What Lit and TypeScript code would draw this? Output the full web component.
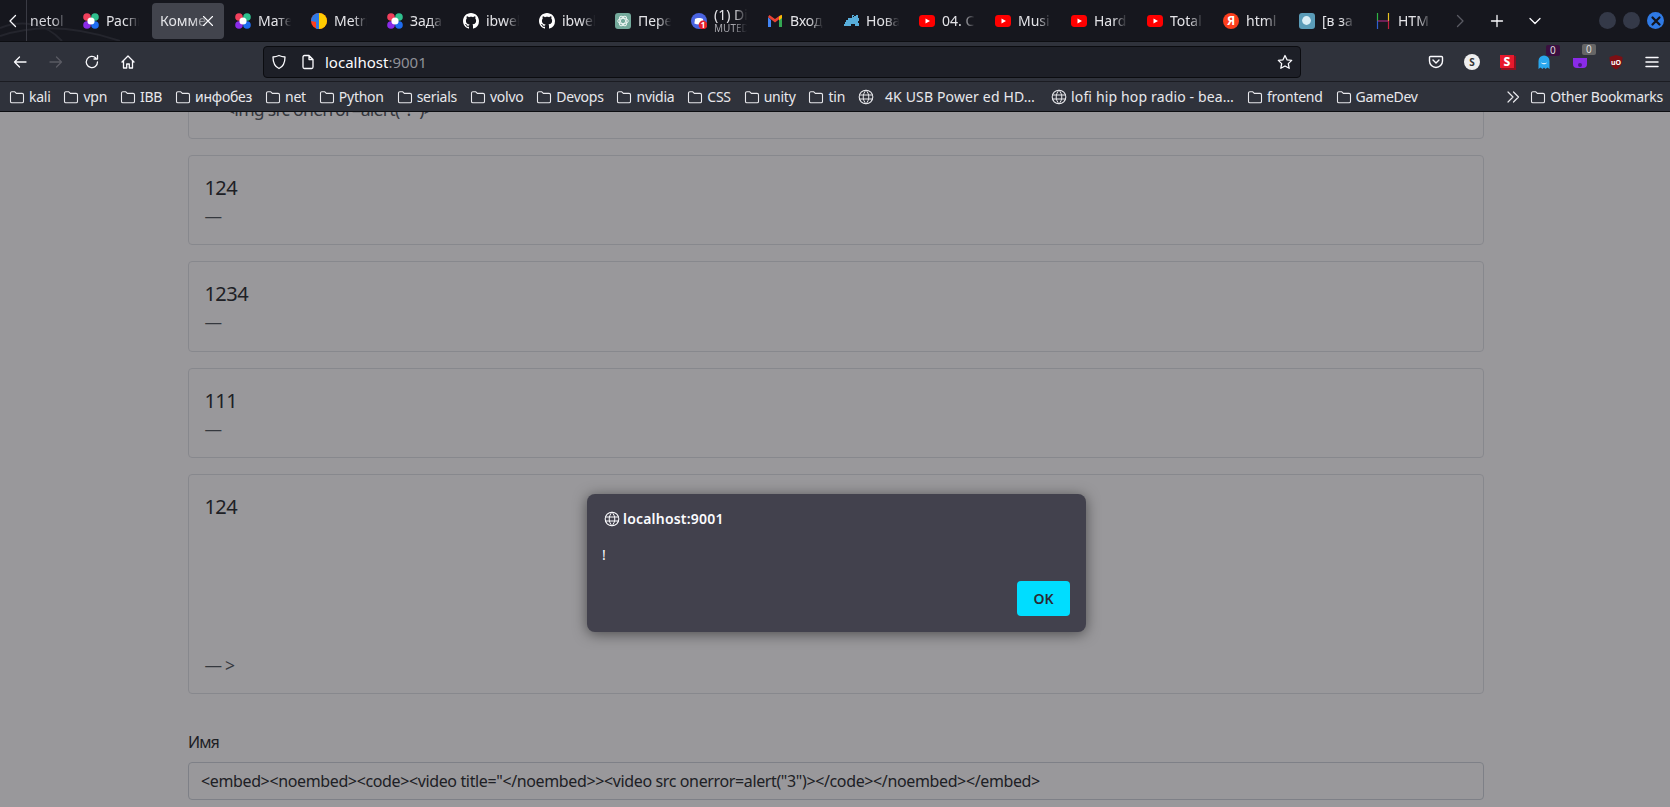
import { LitElement, html, css, svg } from "lit";
import { customElement } from "lit/decorators.js";

const ico = (body: unknown, size = 16, box = 16) =>
  html`<svg width=${size} height=${size} viewBox="0 0 ${box} ${box}" fill="none">${body}</svg>`;

const line = (d: string, w = 1.3) =>
  svg`<path d=${d} stroke="currentColor" stroke-width=${w} stroke-linecap="round" stroke-linejoin="round" fill="none"/>`;

const flower = ico(svg`
  <circle cx="4" cy="4" r="3.8" fill="#f0405c"/>
  <circle cx="12" cy="4" r="3.8" fill="#2fc08e"/>
  <circle cx="4" cy="12" r="3.8" fill="#8a2be8"/>
  <circle cx="12" cy="12" r="3.8" fill="#1e6cf0"/>
  <circle cx="8" cy="8" r="3.6" fill="#fff"/>`);
const metrika = ico(svg`
  <circle cx="8" cy="8" r="8" fill="#fc3f1d"/>
  <path d="M8 0a8 8 0 0 1 0 16z" fill="#ffcc00"/>
  <path d="M8 0a8 8 0 0 0-8 8l8 1.5z" fill="#2f7ae5"/>
  <path d="M5 9l3-1v8a8 8 0 0 1-3-.6z" fill="#2f7ae5"/>`);
const github = ico(svg`<path fill="#fff" d="M8 0C3.58 0 0 3.58 0 8c0 3.54 2.29 6.53 5.47 7.59.4.07.55-.17.55-.38 0-.19-.01-.82-.01-1.49-2.01.37-2.53-.49-2.69-.94-.09-.23-.48-.94-.82-1.13-.28-.15-.68-.52-.01-.53.63-.01 1.08.58 1.23.82.72 1.21 1.87.87 2.33.66.07-.52.28-.87.51-1.07-1.78-.2-3.64-.89-3.64-3.95 0-.87.31-1.59.82-2.15-.08-.2-.36-1.02.08-2.12 0 0 .67-.21 2.2.82.64-.18 1.32-.27 2-.27.68 0 1.36.09 2 .27 1.53-1.04 2.2-.82 2.2-.82.44 1.1.16 1.92.08 2.12.51.56.82 1.27.82 2.15 0 3.07-1.87 3.75-3.65 3.95.29.25.54.73.54 1.48 0 1.07-.01 1.93-.01 2.2 0 .21.15.46.55.38A8.013 8.013 0 0016 8c0-4.42-3.58-8-8-8z"/>`);
const gpt = ico(svg`
  <rect width="16" height="16" rx="3" fill="#74aa9c"/>
  <g stroke="#e8f2ef" stroke-width="1" fill="none">
    <ellipse cx="8" cy="8" rx="5.2" ry="2.6"/>
    <ellipse cx="8" cy="8" rx="5.2" ry="2.6" transform="rotate(60 8 8)"/>
    <ellipse cx="8" cy="8" rx="5.2" ry="2.6" transform="rotate(120 8 8)"/>
  </g>`);
const discord = ico(svg`
  <circle cx="8" cy="8" r="8" fill="#4a64e0"/>
  <path d="M4 6c2-1.4 6-1.4 8 0l.6 4.4c-2.6 1.4-6.6 1.4-9.2 0z" fill="#fff"/>
  <circle cx="12" cy="12" r="4.4" fill="#e5202a"/>
  <text x="12" y="15" font-size="8" font-weight="700" text-anchor="middle" fill="#fff" font-family="Noto Sans">1</text>`);
const gmail = ico(svg`
  <path d="M1 4v10h3V7z" fill="#4285f4"/>
  <path d="M12 7v7h3V4z" fill="#34a853"/>
  <path d="M1 4l7 5.5L15 4l-1.4-2L8 6 2.4 2z" fill="#ea4335"/>
  <path d="M12 3.4L15 1.8 15 5l-3 2.4z" fill="#fbbc04"/>`);
const frog = ico(svg`
  <path fill="#58aedb" d="M9 2h2v1h2V2h2v3h1v3h-1v2h1v3h-4v-2H8v2H1v-2h1V9h1V7h2V5h4z"/>
  <rect x="10" y="3" width="1" height="1" fill="#17181f"/>`);
const yt = ico(svg`
  <rect y="2" width="16" height="12" rx="3.4" fill="#f00"/>
  <path d="M6.5 5.5v5L11 8z" fill="#fff"/>`);
const yandex = ico(svg`
  <circle cx="8" cy="8" r="8" fill="#fc3f1d"/>
  <text x="8" y="12.4" font-size="12" font-weight="700" text-anchor="middle" fill="#fff" font-family="Noto Sans">Я</text>`);
const orb = ico(svg`
  <rect width="16" height="16" rx="3" fill="#5a9cb8"/>
  <circle cx="7.5" cy="7.5" r="4.4" fill="#d9eef6"/>`);
const htmlMark = ico(svg`
  <path d="M2.5 0v8" stroke="#2fb344" stroke-width="1.2"/>
  <path d="M13.5 0v8" stroke="#e8c220" stroke-width="1.2"/>
  <path d="M2.5 8h11" stroke="#c22a8c" stroke-width="1.2"/>
  <path d="M2.5 8v8" stroke="#2f5fd0" stroke-width="1.2"/>
  <path d="M13.5 8v8" stroke="#c02040" stroke-width="1.2"/>`);

const folder = ico(line("M1.5 4.2c0-.8.6-1.4 1.4-1.4h2.9l1.5 1.6h5.8c.8 0 1.4.6 1.4 1.4v6.6c0 .8-.6 1.3-1.4 1.3H2.9c-.8 0-1.4-.5-1.4-1.3z", 1.1));
const globe = (size = 16) =>
  ico(svg`${line("M8 1.2a6.8 6.8 0 1 0 0 13.6A6.8 6.8 0 0 0 8 1.2z", 1.1)}
    ${line("M1.4 6h13.2M1.4 10h13.2M8 1.2C4.2 5 4.2 11 8 14.8M8 1.2c3.8 3.8 3.8 9.8 0 13.6", 1)}`, size);

interface Tab { icon?: unknown; text: string; sub?: string; active?: boolean }

const TABS: Tab[] = [
  { icon: flower, text: "Распи" },
  { text: "Комме", active: true },
  { icon: flower, text: "Мате" },
  { icon: metrika, text: "Metri" },
  { icon: flower, text: "Зада" },
  { icon: github, text: "ibwel" },
  { icon: github, text: "ibwel" },
  { icon: gpt, text: "Пере" },
  { icon: discord, text: "(1) Di", sub: "MUTED" },
  { icon: gmail, text: "Вход" },
  { icon: frog, text: "Нова" },
  { icon: yt, text: "04. C" },
  { icon: yt, text: "Musi" },
  { icon: yt, text: "Hard" },
  { icon: yt, text: "Total" },
  { icon: yandex, text: "html" },
  { icon: orb, text: "[в за" },
  { icon: htmlMark, text: "HTM" },
];

const BOOKMARKS: { label: string; web?: boolean; cls?: string }[] = [
  { label: "kali" }, { label: "vpn" }, { label: "IBB" }, { label: "инфобез" },
  { label: "net" }, { label: "Python" }, { label: "serials" }, { label: "volvo" },
  { label: "Devops" }, { label: "nvidia" }, { label: "CSS" }, { label: "unity" }, { label: "tin" },
  { label: "4K USB Power ed HD…", web: true, cls: "web wide" },
  { label: "lofi hip hop radio - bea…", web: true, cls: "web" },
  { label: "frontend" }, { label: "GameDev" },
];

@customElement("app-root")
export class AppRoot extends LitElement {
  static styles = css`
    :host {
      display: block;
      height: 100vh;
      overflow: hidden;
      position: relative;
      background: #fff;
      font-family: "Noto Sans", sans-serif;
    }
    .chrome {
      color: #fbfbfe;
      position: relative;
      z-index: 2;
    }
    svg { display: block; flex: none; }

    .tabs {
      height: 41px;
      background: #16171e;
      display: flex;
      align-items: center;
      position: relative;
      font-size: 14px;
    }
    .wallpaper {
      position: absolute;
      left: 0;
      top: 0;
      pointer-events: none;
    }
    .scroll-left {
      width: 27px;
      height: 41px;
      flex: none;
      display: flex;
      align-items: center;
      justify-content: center;
      border-right: 1px solid #3a3b44;
      box-sizing: border-box;
      margin-right: 1px;
      position: relative;
    }
    .first {
      width: 46px;
      flex: none;
      color: #d5d5db;
      font-size: 14px;
      padding-left: 2px;
      box-sizing: border-box;
      overflow: hidden;
      white-space: nowrap;
      -webkit-mask-image: linear-gradient(90deg, #000 55%, transparent 85%);
    }
    .tab {
      width: 72px;
      height: 36px;
      margin: 0 2px;
      flex: none;
      box-sizing: border-box;
      padding: 0 7px;
      display: flex;
      align-items: center;
      gap: 7px;
      border-radius: 4px;
      overflow: hidden;
      position: relative;
    }
    .tab.active {
      background: #42444d;
      padding-left: 8px;
    }
    .tab-text {
      flex: 1;
      min-width: 0;
      overflow: hidden;
      white-space: nowrap;
      line-height: 16px;
      color: #e4e4e8;
      -webkit-mask-image: linear-gradient(90deg, #000 55%, transparent 95%);
    }
    .tab-sub {
      display: block;
      font-size: 10px;
      line-height: 11px;
      color: #a6a6ad;
    }
    .tab-close {
      position: absolute;
      right: 8px;
      top: 10px;
    }
    .tab-ctrl {
      flex: none;
      display: flex;
      align-items: center;
      justify-content: center;
      width: 38px;
    }
    .tab-ctrl.more { width: 36px; }
    .dim { color: #5a5b63; }
    .winbtns {
      margin-left: auto;
      margin-right: 6px;
      display: flex;
      gap: 7px;
    }
    .winbtn {
      width: 17px;
      height: 17px;
      border-radius: 50%;
      background: #343948;
      display: flex;
      align-items: center;
      justify-content: center;
    }
    .winbtn.close { background: #2f7ae5; color: #12141c; }

    .nav {
      height: 40px;
      background: #2f323b;
      border-top: 1px solid #0d0e12;
      box-sizing: border-box;
      display: flex;
      align-items: center;
      padding: 0 0 0 2px;
    }
    .nav-btn {
      width: 36px;
      height: 32px;
      flex: none;
      display: flex;
      align-items: center;
      justify-content: center;
      position: relative;
    }
    .url {
      width: 1038px;
      height: 32px;
      margin-left: 117px;
      margin-right: 117px;
      flex: none;
      box-sizing: border-box;
      background: #1d1f27;
      border: 1px solid #0b0c10;
      border-radius: 4px;
      display: flex;
      align-items: center;
      padding: 0 7px 0 7px;
      font-size: 15px;
      color: #fbfbfe;
    }
    .url svg.shield { margin-right: 13px; }
    .url svg.doc { margin-right: 9px; }
    .url .port { color: #8f9097; }
    .url .star { margin-left: auto; }
    .badge {
      position: absolute;
      top: -1px;
      left: 20px;
      font-size: 10px;
      line-height: 11px;
      padding: 0 4px;
      border-radius: 2px;
      color: #ddd;
      background: #3a0f3f;
    }
    .badge.grey { background: #666; top: -2px; }

    .bookmarks {
      height: 31px;
      background: #2f323b;
      border-top: 1px solid #1b1c22;
      box-sizing: border-box;
      display: flex;
      align-items: center;
      padding-left: 9px;
      font-size: 14px;
      color: #e8e8ec;
      white-space: nowrap;
      border-bottom: 1px solid #0d0e12;
      letter-spacing: -0.25px;
    }
    .bm {
      display: flex;
      align-items: center;
      gap: 4px;
      margin-right: 12.9px;
      flex: none;
    }
    .bm.web { letter-spacing: 0.15px; gap: 4px; }
    .bm.wide { gap: 11px; margin-right: 16px; }
    .bm-more { margin-left: auto; margin-right: 9px; }
    .bm.last { margin-right: 7px; }

    .viewport {
      height: calc(100vh - 112px);
      overflow: hidden;
    }
    .content {
      width: 1296px;
      margin: -63.6px auto 0 188px;
      color: #212529;
    }
    .card {
      border: 1px solid #dee2e6;
      border-radius: 4px;
      padding: 17px 16px 15px 15.4px;
      margin-bottom: 16px;
      height: 90.4px;
      box-sizing: border-box;
    }
    .card.tall { height: 219.6px; }
    .card.tall .desc { margin-top: 130px; }
    .title { font-size: 20px; line-height: 30px; letter-spacing: -0.5px; }
    .desc { font-size: 17.6px; line-height: 26.4px; color: #495057; letter-spacing: -0.75px; }
    .name-label {
      margin-top: 36px;
      margin-bottom: 8px;
      font-size: 16px;
      line-height: 24px;
      color: #212529;
      letter-spacing: -0.9px;
    }
    .field {
      height: 38px;
      box-sizing: border-box;
      border: 1px solid #ced4da;
      border-radius: 4px;
      padding: 0 12px;
      font-size: 16px;
      line-height: 36px;
      color: #212529;
      white-space: nowrap;
      letter-spacing: -0.37px;
    }

    .scrim {
      position: absolute;
      left: 0;
      right: 0;
      top: 112px;
      bottom: 0;
      background: rgba(28, 27, 34, 0.45);
      z-index: 1;
    }
    .dialog {
      position: absolute;
      left: 587px;
      top: 494px;
      width: 499px;
      height: 138px;
      box-sizing: border-box;
      padding: 16px 16px 16px 17px;
      background: #42414d;
      border-radius: 8px;
      box-shadow: 0 2px 14px rgba(0, 0, 0, 0.5);
      color: #fbfbfe;
      z-index: 3;
      display: flex;
      flex-direction: column;
    }
    .dlg-title {
      display: flex;
      align-items: center;
      gap: 3px;
      font-size: 14px;
      font-weight: 600;
      line-height: 18px;
      letter-spacing: 0.2px;
    }
    .dlg-msg {
      margin-top: 17px;
      margin-left: -2px;
      font-size: 14px;
      line-height: 20px;
    }
    .dlg-ok {
      position: absolute;
      right: 16px;
      bottom: 16px;
      width: 53px;
      height: 35px;
      background: #00ddff;
      border-radius: 4px;
      color: #2b2a33;
      font-size: 14px;
      font-weight: 600;
      display: flex;
      align-items: center;
      justify-content: center;
    }
  `;

  private renderTab(t: Tab) {
    return html`<div class="tab ${t.active ? "active" : ""}">
      ${t.icon ?? ""}
      <div class="tab-text">${t.text}${t.sub ? html`<span class="tab-sub">${t.sub}</span>` : ""}</div>
      ${t.active
        ? html`<span class="tab-close">${ico(line("M3.5 3.5l9 9M12.5 3.5l-9 9", 1.1))}</span>`
        : ""}
    </div>`;
  }

  render() {
    return html`
      <div class="chrome">
        <div class="tabs">
          <svg class="wallpaper" width="130" height="41" viewBox="0 0 130 41" fill="none">
            <path d="M0 36C30 26 70 24 120 41M0 28C20 20 45 22 62 41" stroke="#24252d" stroke-width="2"/>
          </svg>
          <div class="scroll-left">${ico(line("M10.5 2.5L5 8l5.5 5.5"))}</div>
          <div class="first">netol</div>
          ${TABS.map((t) => this.renderTab(t))}
          <div class="tab-ctrl more dim">${ico(line("M5.5 2.5L11 8l-5.5 5.5"))}</div>
          <div class="tab-ctrl">${ico(line("M8 2.5v11M2.5 8h11"))}</div>
          <div class="tab-ctrl">${ico(line("M3 5.5L8 10.5l5-5"))}</div>
          <div class="winbtns">
            <div class="winbtn"></div>
            <div class="winbtn"></div>
            <div class="winbtn close">${ico(line("M4 4l8 8M12 4l-8 8", 2.6), 14)}</div>
          </div>
        </div>
        <div class="nav">
          <div class="nav-btn">${ico(line("M14 8H2.5M7.5 3L2.5 8l5 5"))}</div>
          <div class="nav-btn dim">${ico(line("M2 8h11.5M8.5 3l5 5-5 5"))}</div>
          <div class="nav-btn">${ico(line("M13.5 8a5.6 5.6 0 1 1-1.7-4M13.5 1.5V5H10"))}</div>
          <div class="nav-btn">${ico(line("M2 8l6-6 6 6M3.5 7v7h3.2v-4h2.6v4h3.2V7"))}</div>
          <div class="url">
            <svg class="shield" width="16" height="16" viewBox="0 0 16 16" fill="none">${line("M8 1.5c2 1 3.8 1.4 6 1.5 0 5.5-1.5 9.5-6 11.5C3.5 12.5 2 8.5 2 3c2.2-.1 4-.5 6-1.5z")}</svg>
            <svg class="doc" width="16" height="16" viewBox="0 0 16 16" fill="none">${line("M3 3c0-.8.6-1.5 1.4-1.5H9L13 5.5V13c0 .8-.6 1.5-1.4 1.5H4.4C3.6 14.5 3 13.8 3 13zM9 1.5v4h4")}</svg>
            <span>localhost<span class="port">:9001</span></span>
            <span class="star">${ico(line("M8 1.5l2 4.3 4.7.6-3.4 3.2.9 4.7L8 12l-4.2 2.3.9-4.7L1.3 6.4 6 5.8z"))}</span>
          </div>
          <div class="nav-btn">${ico(line("M2.5 2.5h11c.6 0 1 .4 1 1V7a6.5 6.5 0 0 1-13 0V3.5c0-.6.4-1 1-1zM5 6l3 3 3-3", 1.4))}</div>
          <div class="nav-btn">${ico(svg`<circle cx="8" cy="8" r="8" fill="#eee"/><text x="8" y="11.5" font-size="10" font-weight="700" text-anchor="middle" fill="#333" font-family="Noto Sans">S</text>`)}</div>
          <div class="nav-btn">${ico(svg`<rect x="1" y="2" width="15" height="14" fill="#8e1020"/><rect width="14" height="13" y="1" fill="#e8192c"/><text x="7" y="12" font-size="12" font-weight="800" text-anchor="middle" fill="#fff" font-family="Noto Sans">S</text>`)}</div>
          <div class="nav-btn">${ico(svg`<path d="M2.5 15V7a5.5 5.5 0 0 1 11 0v8l-2-1.5L9.5 15 8 13.500 6.500 15l-2-1.500z" fill="#2aa7ee"/><path d="M5.500 9c1 1 4 1 5 0" stroke="#fff" stroke-width="1"/>`)}<span class="badge">0</span></div>
          <div class="nav-btn">${ico(svg`<path d="M1 4h14v6a4 4 0 0 1-4 4H5a4 4 0 0 1-4-4z" fill="#8a2be8"/><circle cx="8" cy="11" r="2" fill="#4a1a80"/>`)}<span class="badge grey">0</span></div>
          <div class="nav-btn">${ico(svg`<path d="M8 1l6.5 2c0 6-1.5 10-6.5 12.5C3 13 1.5 9 1.5 3z" fill="#7d0f14"/><text x="8" y="10.5" font-size="7" font-weight="700" text-anchor="middle" fill="#fff" font-family="Noto Sans">uO</text>`)}</div>
          <div class="nav-btn">${ico(line("M2 3.5h12M2 8h12M2 12.5h12", 1.5))}</div>
        </div>
        <div class="bookmarks">
          ${BOOKMARKS.map(
            (b) => html`<div class="bm ${b.cls ?? ""}">${b.web ? globe() : folder}<span>${b.label}</span></div>`
          )}
          <div class="bm-more">${ico(line("M3 3l5 5-5 5M8.5 3l5 5-5 5", 1.2))}</div>
          <div class="bm last">${folder}<span>Other Bookmarks</span></div>
        </div>
      </div>

      <div class="viewport">
        <div class="content">
          <div class="card">
            <div class="title">&nbsp;</div>
            <div class="desc">— &lt;img src onerror=alert("?")&gt;</div>
          </div>
          <div class="card"><div class="title">124</div><div class="desc">—</div></div>
          <div class="card"><div class="title">1234</div><div class="desc">—</div></div>
          <div class="card"><div class="title">111</div><div class="desc">—</div></div>
          <div class="card tall"><div class="title">124</div><div class="desc">— &gt;</div></div>
          <div class="name-label">Имя</div>
          <div class="field">&lt;embed&gt;&lt;noembed&gt;&lt;code&gt;&lt;video title="&lt;/noembed&gt;&gt;&lt;video src onerror=alert("3")&gt;&lt;/code&gt;&lt;/noembed&gt;&lt;/embed&gt;</div>
        </div>
      </div>

      <div class="scrim"></div>
      <div class="dialog">
        <div class="dlg-title">${globe()}<span>localhost:9001</span></div>
        <div class="dlg-msg">!</div>
        <div class="dlg-ok">OK</div>
      </div>
    `;
  }
}
